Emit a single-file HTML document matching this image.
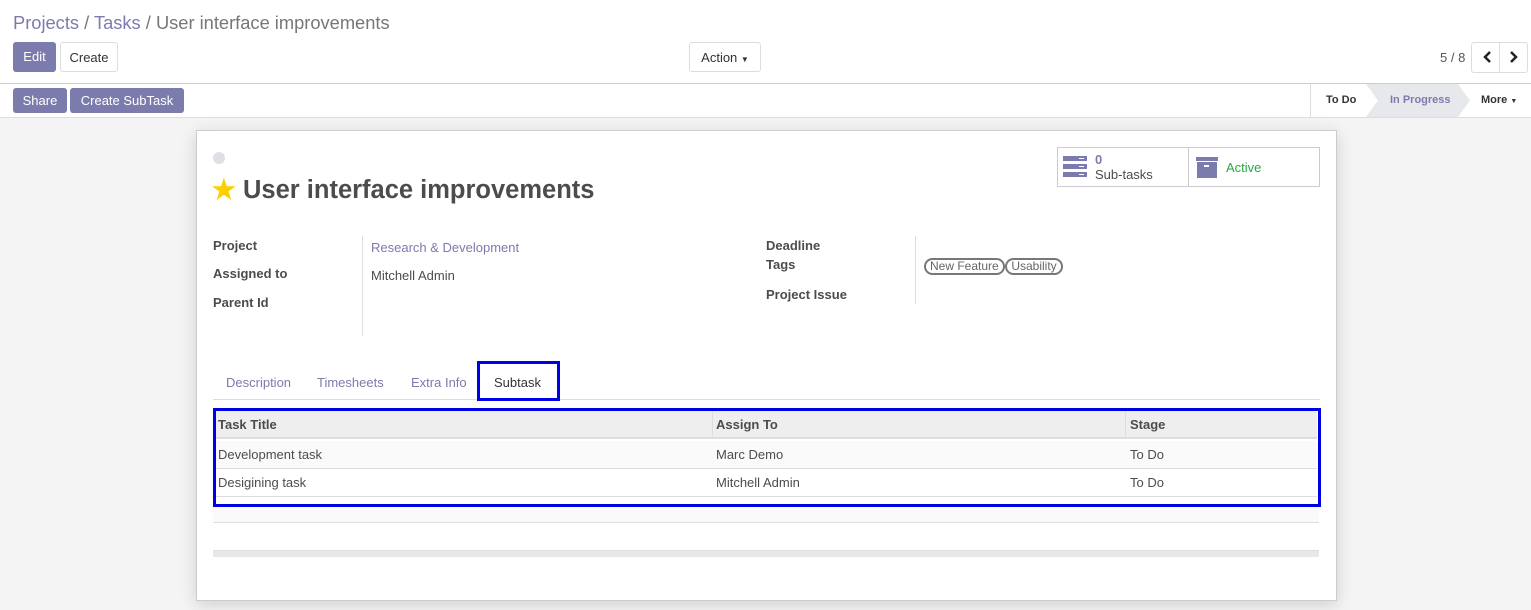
<!DOCTYPE html><html><head><style>
*{box-sizing:border-box;margin:0;padding:0}
body{width:1531px;height:610px;overflow:hidden;font-family:"Liberation Sans",sans-serif;font-size:13px;color:#4c4c4c;background:#fff;position:relative}
.a{position:absolute}
.btn{position:absolute;height:30px;line-height:30px;font-size:13px;border-radius:3px;text-align:center}
.pb{background:#7c7bad;color:#fff}
.wb{background:#fff;border:1px solid #ddd;color:#333}
.lbl{position:absolute;font-weight:bold;color:#4c4c4c}
.tag{display:inline-block;border:2px solid #777;border-radius:9px;padding:0 4px;font-size:12px;color:#666;line-height:13px}
</style></head><body>
<div class="a" style="left:13px;top:12px;font-size:18.3px;color:#7c7bad">Projects <span style="color:#777">/</span> Tasks <span style="color:#777">/ User interface improvements</span></div>
<div class="btn pb" style="left:13px;top:42px;width:43px;">Edit</div>
<div class="btn wb" style="left:60px;top:42px;width:58px;">Create</div>
<div class="btn wb" style="left:689px;top:42px;width:72px;">Action <span style="font-size:8px">▼</span></div>
<div class="a" style="left:1440px;top:50px;color:#555">5 / 8</div>
<div class="a" style="left:1471px;top:42px;width:57px;height:31px;border:1px solid #ddd;border-radius:3px"></div>
<div class="a" style="left:1499px;top:42px;width:1px;height:31px;background:#ddd"></div>
<svg class="a" style="left:1479px;top:50px" width="44" height="14"><path d="M11 2 L6 7 L11 12" stroke="#222" stroke-width="2.5" fill="none"/><path d="M32 2 L37 7 L32 12" stroke="#222" stroke-width="2.5" fill="none"/></svg>
<div class="a" style="left:0;top:83px;width:1531px;height:1px;background:#ccc"></div>
<div class="btn pb" style="left:13px;top:88px;width:54px;height:25px;line-height:25px">Share</div>
<div class="btn pb" style="left:70px;top:88px;width:114px;height:25px;line-height:25px">Create SubTask</div>
<div class="a" style="left:1310px;top:84px;width:1px;height:33px;background:#ddd"></div>
<svg class="a" style="left:1366px;top:84px" width="104" height="33"><polygon points="0,0 92,0 104,16.5 92,33 0,33 12,16.5" fill="#e6e8ec"/></svg>
<div class="a" style="left:1326px;top:94px;font-size:11px;font-weight:bold;color:#333">To Do</div>
<div class="a" style="left:1390px;top:94px;font-size:11px;font-weight:bold;color:#7c7bad">In Progress</div>
<div class="a" style="left:1481px;top:94px;font-size:11px;font-weight:bold;color:#333">More <span style="font-size:7px">▼</span></div>
<div class="a" style="left:0;top:117px;width:1531px;height:493px;background:#f4f4f4;border-top:1px solid #ddd"></div>
<div class="a" style="left:196px;top:130px;width:1141px;height:471px;background:#fff;border:1px solid #ccc;box-shadow:0 4px 16px rgba(0,0,0,.15)"></div>
<div class="a" style="left:213px;top:152px;width:12px;height:12px;border-radius:6px;background:#dde0e4"></div>
<div class="a" style="left:210px;top:172px;font-size:31px;color:#fcd000">★</div>
<div class="a" style="left:243px;top:176px;font-size:25.5px;font-weight:bold;color:#4c4c4c">User interface improvements</div>
<div class="a" style="left:1057px;top:147px;width:263px;height:40px;border:1px solid #ccc"></div>
<div class="a" style="left:1188px;top:147px;width:1px;height:40px;background:#ccc"></div>
<svg class="a" style="left:1063px;top:156px" width="26" height="22"><rect y="0" width="24" height="5" fill="#7c7bad"/><rect y="8" width="24" height="5" fill="#7c7bad"/><rect y="16" width="24" height="5" fill="#7c7bad"/><rect x="16" y="2" width="5" height="1" fill="#fff"/><rect x="16" y="10" width="5" height="1" fill="#fff"/><rect x="16" y="18" width="5" height="1" fill="#fff"/></svg>
<div class="a" style="left:1095px;top:152px;font-weight:bold;color:#7c7bad">0</div>
<div class="a" style="left:1095px;top:167px;color:#4c4c4c">Sub-tasks</div>
<svg class="a" style="left:1196px;top:157px" width="22" height="22"><rect width="22" height="4" fill="#7c7bad"/><rect x="1" y="5" width="20" height="16" fill="#7c7bad"/><rect x="8" y="8" width="5" height="2" fill="#fff"/></svg>
<div class="a" style="left:1226px;top:160px;color:#28a745">Active</div>
<div class="lbl" style="left:213px;top:238px">Project</div>
<div class="lbl" style="left:213px;top:266px">Assigned to</div>
<div class="lbl" style="left:213px;top:295px">Parent Id</div>
<div class="a" style="left:362px;top:236px;width:1px;height:100px;background:#ddd"></div>
<div class="a" style="left:371px;top:240px;color:#7c7bad">Research &amp; Development</div>
<div class="a" style="left:371px;top:268px">Mitchell Admin</div>
<div class="lbl" style="left:766px;top:238px">Deadline</div>
<div class="lbl" style="left:766px;top:257px">Tags</div>
<div class="lbl" style="left:766px;top:287px">Project Issue</div>
<div class="a" style="left:915px;top:236px;width:1px;height:68px;background:#ddd"></div>
<div class="a" style="left:924px;top:258px"><span class="tag">New Feature</span> <span class="tag" style="margin-left:-3px">Usability</span></div>
<div class="a" style="left:213px;top:399px;width:1107px;height:1px;background:#ddd"></div>
<div class="a" style="left:226px;top:375px;color:#7c7bad">Description</div>
<div class="a" style="left:317px;top:375px;color:#7c7bad">Timesheets</div>
<div class="a" style="left:411px;top:375px;color:#7c7bad">Extra Info</div>
<div class="a" style="left:477px;top:361px;width:83px;height:40px;border:3px solid #0000e6;background:#fff"></div>
<div class="a" style="left:494px;top:375px;color:#333">Subtask</div>
<div class="a" style="left:213px;top:408px;width:1108px;height:99px;border:3px solid #0000e6"></div>
<div class="a" style="left:216px;top:411px;width:1101px;height:28px;background:#eee;border-bottom:2px solid #ddd"></div>
<div class="a" style="left:216px;top:441px;width:1101px;height:28px;background:#fafafa;border-bottom:1px solid #ddd"></div>
<div class="a" style="left:216px;top:469px;width:1101px;height:28px;border-bottom:1px solid #ddd"></div>
<div class="a" style="left:712px;top:411px;width:1px;height:28px;background:#ddd"></div>
<div class="a" style="left:1125px;top:411px;width:1px;height:28px;background:#ddd"></div>
<div class="lbl" style="left:218px;top:417px">Task Title</div>
<div class="lbl" style="left:716px;top:417px">Assign To</div>
<div class="lbl" style="left:1130px;top:417px">Stage</div>
<div class="a" style="left:218px;top:447px">Development task</div>
<div class="a" style="left:716px;top:447px">Marc Demo</div>
<div class="a" style="left:1130px;top:447px">To Do</div>
<div class="a" style="left:218px;top:475px">Desigining task</div>
<div class="a" style="left:716px;top:475px">Mitchell Admin</div>
<div class="a" style="left:1130px;top:475px">To Do</div>
<div class="a" style="left:213px;top:507px;width:1106px;height:16px;background:#fafafa;border-bottom:1px solid #ddd"></div>
<div class="a" style="left:213px;top:550px;width:1106px;height:7px;background:#e8e8e8;border-top:1px solid #ddd"></div>
</body></html>
